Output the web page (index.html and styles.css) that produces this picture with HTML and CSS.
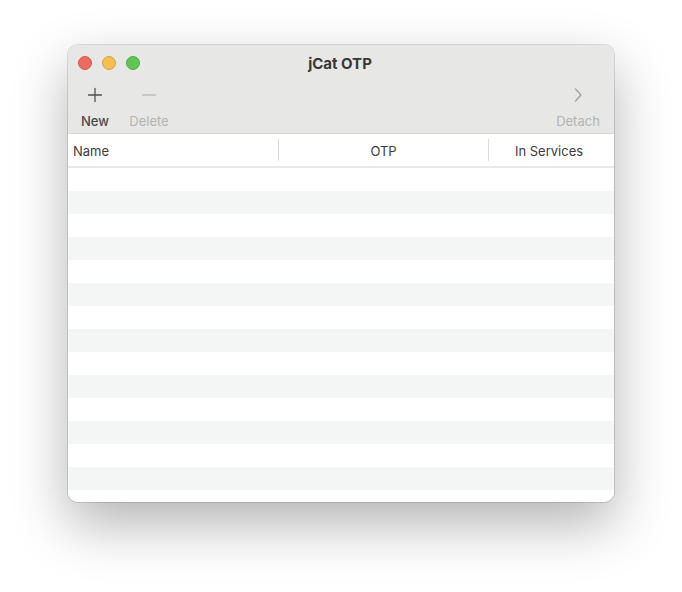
FILE: index.html
```html
<!DOCTYPE html>
<html lang="en">
<head>
<meta charset="utf-8">
<title>jCat OTP</title>
<link rel="stylesheet" href="styles.css">
</head>
<body>
<div class="window">
  <div class="toolbar">
    <div class="titlebar">
      <div class="lights">
        <span class="light red"></span>
        <span class="light yellow"></span>
        <span class="light green"></span>
      </div>
      <div class="title">jCat OTP</div>
      <div class="spacer"></div>
    </div>
    <div class="tools">
      <div class="tool tool-new">
        <div class="icon">
          <svg width="16" height="16" viewBox="0 0 16 16"><path d="M8 1.5V14.5M1.5 8H14.5" stroke="#505050" stroke-width="1.3" fill="none" stroke-linecap="round"/></svg>
        </div>
        <div class="label">New</div>
      </div>
      <div class="tool tool-delete disabled">
        <div class="icon">
          <svg width="16" height="16" viewBox="0 0 16 16"><path d="M1.5 8H14.5" stroke="#bdbdbd" stroke-width="1.3" fill="none" stroke-linecap="round"/></svg>
        </div>
        <div class="label">Delete</div>
      </div>
      <div class="grow"></div>
      <div class="tool tool-detach disabled">
        <div class="icon">
          <svg width="10" height="16" viewBox="0 0 10 16"><path d="M2.5 2L8 8L2.5 14" stroke="#a3a3a3" stroke-width="1.4" fill="none" stroke-linecap="round" stroke-linejoin="round"/></svg>
        </div>
        <div class="label">Detach</div>
      </div>
    </div>
  </div>
  <div class="table">
    <div class="thead">
      <div class="th th-name">Name</div>
      <div class="th th-otp">OTP</div>
      <div class="th th-svc">In Services</div>
    </div>
    <div class="tbody">
      <div class="row"></div><div class="row"></div><div class="row"></div><div class="row"></div>
      <div class="row"></div><div class="row"></div><div class="row"></div><div class="row"></div>
      <div class="row"></div><div class="row"></div><div class="row"></div><div class="row"></div>
      <div class="row"></div><div class="row"></div><div class="row"></div>
    </div>
  </div>
</div>
</body>
</html>
```
FILE: styles.css
```css
html, body {
  margin: 0;
  padding: 0;
  background: #ffffff;
}
html {
  height: 100%;
}
body {
  box-sizing: border-box;
  min-height: 592px;
  height: 100%;
  padding: 45px 0 0 68px;
  font-family: Inter, "Noto Sans", "Liberation Sans", sans-serif;
}
.window {
  width: 546px;
  height: 457px;
  border-radius: 10px;
  overflow: hidden;
  background: #ffffff;
  box-shadow: 0 0 0 1px rgba(0,0,0,0.12), 0 22px 55px rgba(0,0,0,0.30);
  display: flex;
  flex-direction: column;
}
.toolbar {
  background: #e7e7e5;
  border-bottom: 1px solid #d5d5d3;
  display: flex;
  flex-direction: column;
}
.titlebar {
  height: 35px;
  display: grid;
  grid-template-columns: 1fr auto 1fr;
  align-items: center;
}
.lights {
  display: flex;
  gap: 10px;
  padding-left: 10px;
}
.light {
  width: 14px;
  height: 14px;
  border-radius: 50%;
  box-sizing: border-box;
}
.red { background: #ed6a5e; border: 0.5px solid #d1584d; }
.yellow { background: #f5bf4f; border: 0.5px solid #d6a243; }
.green { background: #61c554; border: 0.5px solid #52a843; }
.title {
  font-size: 15px;
  font-weight: 700;
  color: #383838;
  padding-top: 1px;
  padding-right: 2px;
}
.tools {
  height: 53px;
  display: flex;
  padding: 0 11px 0 5px;
}
.grow { flex: 1; }
.tool {
  display: flex;
  flex-direction: column;
  align-items: center;
}
.tool-new { width: 44px; }
.tool-delete { width: 52px; margin-left: 6px; }
.tool-detach { width: 50px; }
.icon {
  height: 30px;
  display: flex;
  align-items: center;
  justify-content: center;
}
.label {
  margin-top: 3px;
  font-size: 13px;
  line-height: 16px;
  color: #4a4a4a;
  font-weight: 500;
}
.disabled .label {
  color: #b3b3b3;
  font-weight: 400;
}
.table {
  flex: 1;
  display: flex;
  flex-direction: column;
  overflow: hidden;
}
.thead {
  height: 32px;
  border-bottom: 2px solid #e8e8e8;
  display: grid;
  grid-template-columns: 210px 210px 1fr;
  align-items: center;
}
.th {
  font-size: 13px;
  color: #3c3c3c;
  padding-top: 2px;
  height: 20px;
  line-height: 20px;
}
.th-name {
  padding-left: 5px;
}
.th-otp, .th-svc {
  text-align: center;
  border-left: 1px solid #dddddd;
}
.th-svc {
  padding-right: 5px;
}
.tbody {
  flex: 1;
  overflow: hidden;
}
.row {
  height: 23px;
  background: #ffffff;
}
.row:nth-child(even) {
  background: #f4f5f5;
}
```
